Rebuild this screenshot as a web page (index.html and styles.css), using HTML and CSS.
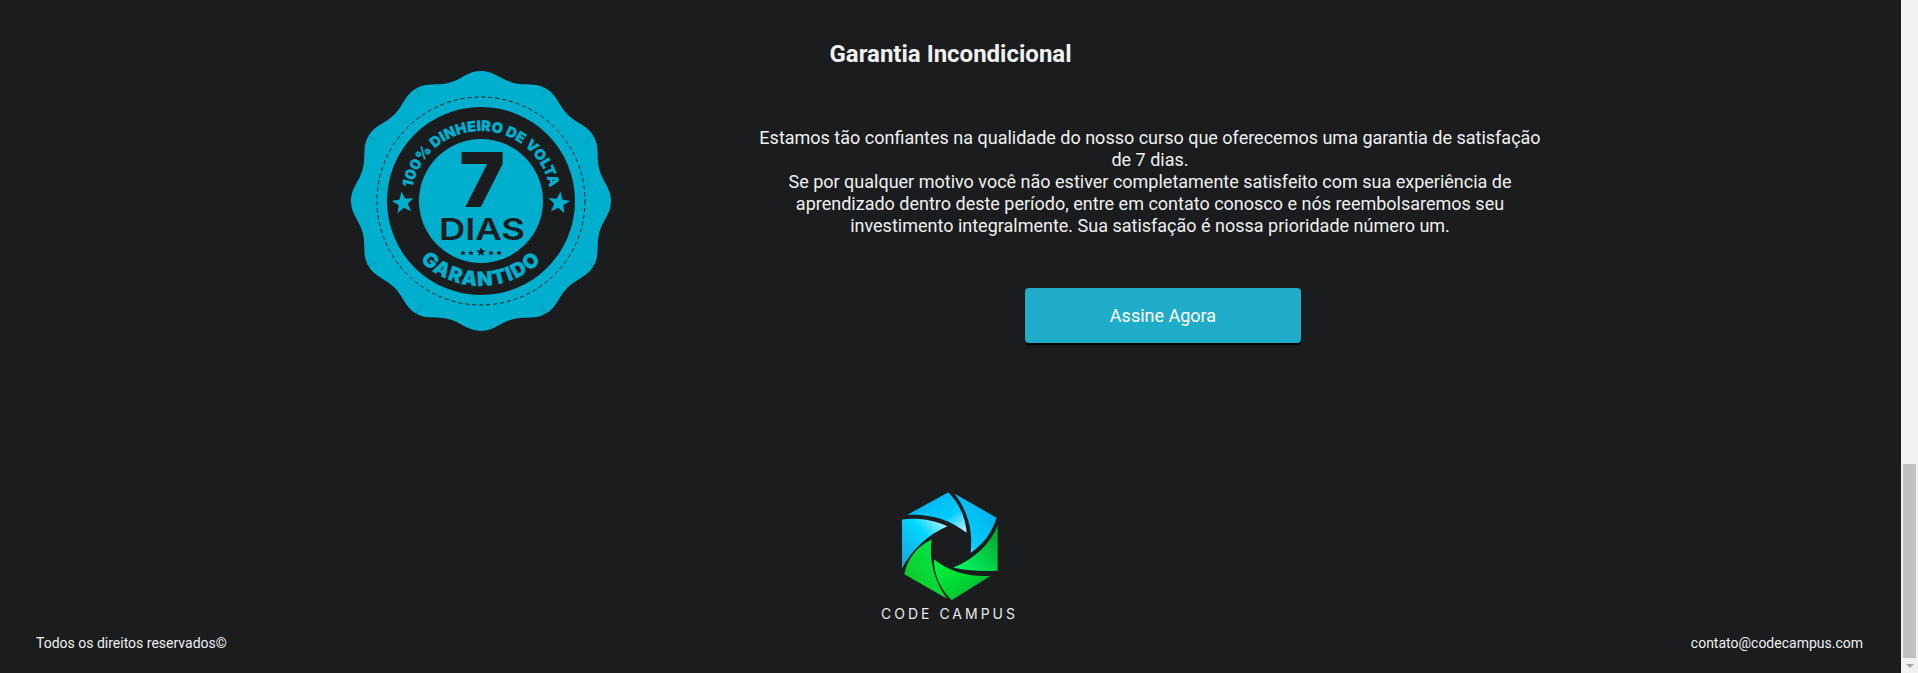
FILE: index.html
```
<!DOCTYPE html>
<html lang="pt-BR">
<head>
<meta charset="utf-8">
<title>Code Campus</title>
<link rel="stylesheet" href="styles.css">
</head>
<body>
<div class="page">
	<h2 class="title">Garantia Incondicional</h2>
	<section class="guarantee">
		<svg class="badge" viewBox="-131 -131 262 262" width="262" height="262">
			<defs>
				<path id="wedge" d="M0 0L0 -130C13 -130 19.14 -121.7 31.7 -118.3C44.26 -114.9 53.74 -119.1 65 -112.6Z"/>
				<polygon id="star" points="0,-10 2.47,-3.4 9.51,-3.09 4,1.3 5.88,8.09 0,4.2 -5.88,8.09 -4,1.3 -9.51,-3.09 -2.47,-3.4"/>
				<path id="arcTop" d="M-70 0A70 70 0 0 1 70 0"/>
				<path id="arcBottom" d="M-85 0A85 85 0 0 0 85 0"/>
			</defs>
			<g class="badge-body">
				<circle r="120"/>
				<use href="#wedge"/>
				<use href="#wedge" transform="rotate(30)"/>
				<use href="#wedge" transform="rotate(60)"/>
				<use href="#wedge" transform="rotate(90)"/>
				<use href="#wedge" transform="rotate(120)"/>
				<use href="#wedge" transform="rotate(150)"/>
				<use href="#wedge" transform="rotate(180)"/>
				<use href="#wedge" transform="rotate(210)"/>
				<use href="#wedge" transform="rotate(240)"/>
				<use href="#wedge" transform="rotate(270)"/>
				<use href="#wedge" transform="rotate(300)"/>
				<use href="#wedge" transform="rotate(330)"/>
			</g>
			<circle class="badge-dash" r="104"/>
			<circle class="badge-ring" r="94"/>
			<circle class="badge-core" r="62"/>
			<text class="badge-arc badge-arc-top"><textPath href="#arcTop" startOffset="50%">100% DINHEIRO DE VOLTA</textPath></text>
			<text class="badge-arc badge-arc-bottom"><textPath href="#arcBottom" startOffset="50%">GARANTIDO</textPath></text>
			<use class="badge-star" href="#star" transform="translate(-78 2) rotate(-8) scale(1.15)"/>
			<use class="badge-star" href="#star" transform="translate(78 2) rotate(8) scale(1.15)"/>
			<text class="badge-seven" x="1" y="6">7</text>
			<text class="badge-days" x="1" y="39" textLength="86" lengthAdjust="spacingAndGlyphs">DIAS</text>
			<g class="badge-mini">
				<use href="#star" transform="translate(-18 52) scale(.3)"/>
				<use href="#star" transform="translate(-10 52) scale(.3)"/>
				<use href="#star" transform="translate(0 51) scale(.5)"/>
				<use href="#star" transform="translate(10 52) scale(.3)"/>
				<use href="#star" transform="translate(18 52) scale(.3)"/>
			</g>
		</svg>
		<div class="guarantee-text">
			<p>Estamos tão confiantes na qualidade do nosso curso que oferecemos uma garantia de satisfação de 7 dias.<br>
			Se por qualquer motivo você não estiver completamente satisfeito com sua experiência de aprendizado dentro deste período, entre em contato conosco e nós reembolsaremos seu investimento integralmente. Sua satisfação é nossa prioridade número um.</p>
			<a class="btn" href="#">Assine Agora</a>
		</div>
	</section>
	<footer class="footer">
		<span>Todos os direitos reservados©</span>
		<div class="brand">
			<svg class="logo" viewBox="120 30 300 335" width="100" height="112">
				<defs>
					<linearGradient id="blueA" x1="0" y1="0" x2="1" y2="1">
						<stop offset="0" stop-color="#0aa8e0"/>
						<stop offset=".65" stop-color="#00ccff"/>
						<stop offset="1" stop-color="#d0f6ff"/>
					</linearGradient>
					<linearGradient id="blueB" x1="1" y1="0" x2="0" y2="1">
						<stop offset="0" stop-color="#0aa8e0"/>
						<stop offset=".7" stop-color="#00ccff"/>
						<stop offset="1" stop-color="#d0f6ff"/>
					</linearGradient>
					<linearGradient id="blueC" x1="0" y1="1" x2="1" y2="0">
						<stop offset="0" stop-color="#1aa0dc"/>
						<stop offset=".6" stop-color="#00d8ff"/>
						<stop offset="1" stop-color="#d0f6ff"/>
					</linearGradient>
					<linearGradient id="greenA" x1="1" y1="0" x2="0" y2="1">
						<stop offset="0" stop-color="#08a028"/>
						<stop offset="1" stop-color="#00ff6a"/>
					</linearGradient>
					<linearGradient id="greenB" x1="0" y1="0" x2="1" y2="1">
						<stop offset="0" stop-color="#00f83c"/>
						<stop offset=".6" stop-color="#00d030"/>
						<stop offset="1" stop-color="#0a7050"/>
					</linearGradient>
					<linearGradient id="greenC" x1="1" y1="0" x2="0" y2="1">
						<stop offset="0" stop-color="#00f050"/>
						<stop offset="1" stop-color="#12c020"/>
					</linearGradient>
				</defs>
				<path fill="url(#blueA)" d="M142 104L265 36C298 70 316 110 320 158C270 118 210 100 142 104Z"/>
				<path fill="url(#blueB)" d="M283 40L410 113C395 160 370 192 332 218C340 150 322 90 283 40Z"/>
				<path fill="url(#greenA)" d="M413 135L413 272C366 274 322 272 280 262C345 235 392 190 413 135Z"/>
				<path fill="url(#greenB)" d="M222 238C270 275 330 292 393 287L275 360C240 325 222 285 222 238Z"/>
				<path fill="url(#greenC)" d="M215 178C205 240 225 305 260 355L133 282C142 235 170 200 215 178Z"/>
				<path fill="url(#blueC)" d="M126 118C175 112 222 120 262 138C200 165 155 210 126 265Z"/>
			</svg>
			<span class="brand-name">CODE CAMPUS</span>
		</div>
		<span class="footer-right">contato@codecampus.com</span>
	</footer>
</div>
<div class="scrollbar">
	<div class="scrollbar-thumb"></div>
	<div class="scrollbar-arrow"></div>
</div>
</body>
</html>
```

FILE: styles.css
```
html, body { margin: 0; padding: 0; height: 100%; overflow: hidden; }
body { display: flex; background: #1a1c1e; color: #f0f0f0; font-family: Roboto, "Liberation Sans", sans-serif; }

.page { flex: 1; min-width: 0; display: flex; flex-direction: column; }

.title { margin: 0; padding-top: 40px; font-size: 24px; line-height: 28px; font-weight: 700; text-align: center; }

.guarantee { display: flex; align-items: flex-start; padding-left: 350px; margin-top: 2px; }
.badge { flex: none; display: block; }
.badge-body { fill: #00afcd; }
.badge-dash { fill: none; stroke: #1a1c1e; stroke-width: 1; stroke-dasharray: 4 3; }
.badge-ring { fill: #1a1c1e; }
.badge-core { fill: #00afcd; }
.badge-star { fill: #00afcd; }
.badge-arc { fill: #00afcd; stroke: #00afcd; stroke-width: .3px; font-family: Inter, "Liberation Sans", sans-serif; font-weight: 900; text-anchor: middle; }
.badge-arc-top { font-size: 14.5px; letter-spacing: .1px; }
.badge-arc-bottom { font-size: 20px; letter-spacing: 1.2px; }
.badge-seven { fill: #1a1c1e; font-family: Inter, "Liberation Sans", sans-serif; font-weight: 900; font-size: 76px; text-anchor: middle; }
.badge-days { fill: #1a1c1e; font-family: Inter, "Liberation Sans", sans-serif; font-weight: 600; font-size: 30px; text-anchor: middle; }
.badge-mini { fill: #1a1c1e; }

.guarantee-text { width: 790px; margin-left: 143px; padding-top: 57px; }
.guarantee-text p { margin: 0; font-size: 18px; line-height: 22px; text-align: center; }

.btn { display: block; width: 276px; height: 55px; margin: 51px 0 0 270px; border-radius: 4px; background: #1facc9; box-shadow: 0 2px 2px #000; color: #fff; font-size: 18px; line-height: 55px; text-align: center; text-decoration: none; }

.footer { display: grid; grid-template-columns: 1fr auto 1fr; align-items: end; margin-top: auto; padding: 0 38px 21px 36px; font-size: 14px; line-height: 17px; }
.footer-right { text-align: right; }
.brand { display: flex; flex-direction: column; align-items: center; margin-bottom: 30px; }
.logo { display: block; }
.brand-name { margin-top: 3px; color: #e8e8e8; font-family: Inter, "Liberation Sans", sans-serif; font-weight: 400; font-size: 14px; letter-spacing: 3px; }

.scrollbar { flex: none; width: 17px; background: #f1f1f1; display: flex; flex-direction: column; align-items: center; }
.scrollbar-thumb { width: 13px; height: 194px; margin-top: 464px; background: #c1c1c1; }
.scrollbar-arrow { width: 0; height: 0; margin-top: 6px; border-left: 4px solid transparent; border-right: 4px solid transparent; border-top: 4px solid #a3a3a3; }
```
